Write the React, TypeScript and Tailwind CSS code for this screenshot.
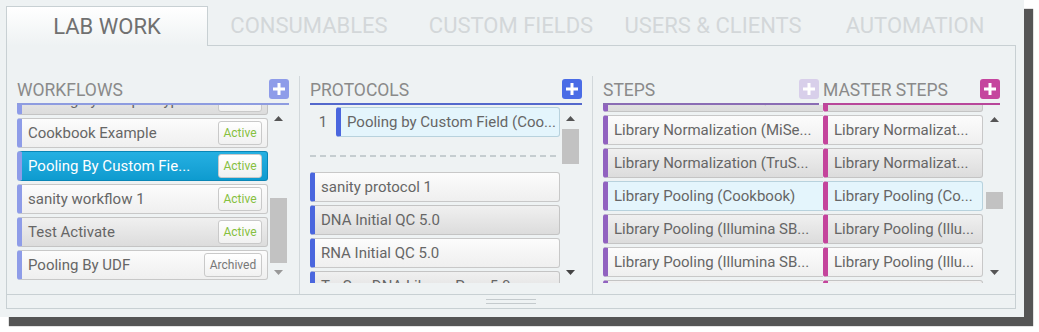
import React from "react";

type Tone = "white" | "gray" | "sel" | "blue";

const toneCls: Record<Tone, string> = {
  white: "bg-linear-to-b from-[#fcfcfc] to-[#efefef] border-[#c8c8c8] text-[#666]",
  gray: "bg-linear-to-b from-[#f0f0f0] to-[#dcdcdc] border-[#c4c4c4] text-[#666]",
  sel: "bg-linear-to-b from-[#25b0e2] to-[#0d9bcf] border-[#0a86b6] text-white",
  blue: "bg-[#e4f5fc] border-[#b8d2dd] text-[#666]",
};

function Row({
  text,
  tone,
  stripe,
  badge,
  extra = "",
}: {
  text: string;
  tone: Tone;
  stripe: string;
  badge?: "Active" | "Archived";
  extra?: string;
}) {
  return (
    <div
      className={`h-[30px] shrink-0 rounded-[3px] border border-l-[5px] flex items-center pl-[6px] pr-[5px] text-[15px] whitespace-nowrap overflow-hidden ${toneCls[tone]} ${stripe} ${extra}`}
    >
      <span className="flex-1">{text}</span>
      {badge === "Active" && (
        <span className="w-[44px] h-[24px] rounded-[3px] border border-[#c9c9c9] bg-linear-to-b from-white to-[#f1f1f1] text-[12px] text-[#86c040] flex items-center justify-center">
          Active
        </span>
      )}
      {badge === "Archived" && (
        <span className="w-[58px] h-[24px] rounded-[3px] border border-[#c9c9c9] bg-linear-to-b from-white to-[#f1f1f1] text-[12px] text-[#777] flex items-center justify-center">
          Archived
        </span>
      )}
    </div>
  );
}

function Up({ color = "#555" }: { color?: string }) {
  return (
    <svg width="9" height="5" viewBox="0 0 9 5" className="block mx-auto">
      <polygon points="0,5 9,5 4.5,0" fill={color} />
    </svg>
  );
}
function Down({ color = "#555" }: { color?: string }) {
  return (
    <svg width="9" height="5" viewBox="0 0 9 5" className="block mx-auto">
      <polygon points="0,0 9,0 4.5,5" fill={color} />
    </svg>
  );
}

function Plus({ bg }: { bg: string }) {
  return (
    <div className={`w-[20px] h-[20px] shrink-0 rounded-[3px] flex items-center justify-center mb-[4px] ${bg}`}>
      <svg width="12" height="12" viewBox="0 0 12 12">
        <rect x="4.5" y="0" width="3" height="12" fill="#fff" />
        <rect x="0" y="4.5" width="12" height="3" fill="#fff" />
      </svg>
    </div>
  );
}

function Header({ title, plus, line, extra = "" }: { title: string; plus: string; line: string; extra?: string }) {
  return (
    <div className={`h-[29px] flex items-end justify-between border-b-2 ${line} ${extra}`}>
      <span className="text-[17.5px] leading-[20px] text-[#8a8a8a] mb-[3px] whitespace-nowrap">{title}</span>
      <Plus bg={plus} />
    </div>
  );
}

const WF = "border-l-[#8e9ce8]";
const PR = "border-l-[#4a66de]";
const ST = "border-l-[#9162c0]";
const MS = "border-l-[#c4449c]";

export default function App() {
  const tabs = ["LAB WORK", "CONSUMABLES", "CUSTOM FIELDS", "USERS & CLIENTS", "AUTOMATION"];
  return (
    <div className="w-[1039px] h-[332px] bg-white font-[Roboto,sans-serif] overflow-hidden">
      <div className="w-[1024px] h-[317px] bg-[#eef2f3] shadow-[9px_9px_1px_#555] pt-[6px]">
        <div className="ml-[6px] w-[1010px]">
          {/* Tabs */}
          <div className="flex h-[40px]">
            {tabs.map((t, i) =>
              i === 0 ? (
                <div
                  key={t}
                  className="w-[202px] border-l border-t border-r border-[#c8d0d3] bg-linear-to-b from-white to-[#eef2f3] flex items-center justify-center text-[22px] text-[#707070]"
                >
                  {t}
                </div>
              ) : (
                <div
                  key={t}
                  className="w-[202px] border-b border-[#c8d0d3] flex items-center justify-center text-[22px] text-[#d3d7d9]"
                >
                  {t}
                </div>
              )
            )}
          </div>
          {/* Body */}
          <div className="border-l border-r border-b border-[#c8d0d3] h-[263px] flex flex-col">
            <div className="flex pt-[30px] h-[248px]">
              {/* Workflows */}
              <div className="w-[293px] border-r border-[#d2d8db] px-[10px]">
                <Header title="WORKFLOWS" plus="bg-[#8e9ce9]" line="border-[#8e9ce0]" />
                <div className="flex h-[178px]">
                  <div className="w-[251px] overflow-hidden">
                    <div className="flex flex-col gap-[3px] -mt-[20px]">
                      <Row text="Pooling by Sample Type" tone="gray" stripe={WF} badge="Active" />
                      <Row text="Cookbook Example" tone="white" stripe={WF} badge="Active" />
                      <Row text="Pooling By Custom Fie..." tone="sel" stripe={WF} badge="Active" />
                      <Row text="sanity workflow 1" tone="white" stripe={WF} badge="Active" />
                      <Row text="Test Activate" tone="gray" stripe={WF} badge="Active" />
                      <Row text="Pooling By UDF" tone="white" stripe={WF} badge="Archived" />
                    </div>
                  </div>
                  <div className="w-[17px] ml-[2px] flex flex-col">
                    <div className="mt-[11px] shrink-0"><Up /></div>
                    <div className="mt-[77px] h-[65px] shrink-0 bg-[#c2c2c2]" />
                    <div className="mt-[7px] shrink-0"><Down color="#999" /></div>
                  </div>
                </div>
              </div>
              {/* Protocols */}
              <div className="w-[293px] border-r border-[#d2d8db] px-[10px]">
                <Header title="PROTOCOLS" plus="bg-[#4a6ce6]" line="border-[#5468cc]" />
                <div className="flex h-[178px]">
                  <div className="w-[250px] overflow-hidden">
                    <div className="flex items-center mt-[2px]">
                      <span className="w-[26px] text-center text-[15px] text-[#666]">1</span>
                      <Row text="Pooling by Custom Field (Coo..." tone="blue" stripe={PR} extra="flex-1" />
                    </div>
                    <div className="mt-[18px] h-[2px] w-[252px] bg-[repeating-linear-gradient(90deg,#c5cdd0_0_6px,transparent_6px_10px)]" />
                    <div className="flex flex-col gap-[3px] mt-[15px]">
                      <Row text="sanity protocol 1" tone="white" stripe={PR} />
                      <Row text="DNA Initial QC 5.0" tone="gray" stripe={PR} />
                      <Row text="RNA Initial QC 5.0" tone="white" stripe={PR} />
                      <Row text="TruSeq DNA Library Prep 5.0" tone="gray" stripe={PR} />
                    </div>
                  </div>
                  <div className="w-[17px] ml-[2px] flex flex-col">
                    <div className="mt-[11px] shrink-0"><Up /></div>
                    <div className="mt-[8px] h-[35px] shrink-0 bg-[#c2c2c2]" />
                    <div className="mt-[106px] shrink-0"><Down color="#444" /></div>
                  </div>
                </div>
              </div>
              {/* Steps + Master steps */}
              <div className="flex-1 pl-[10px]">
                <div className="flex">
                  <Header title="STEPS" plus="bg-[#d8cfea]" line="border-[#8a6cb4]" extra="w-[216px]" />
                  <Header title="MASTER STEPS" plus="bg-[#c5459e]" line="border-[#b8479a]" extra="w-[177px] ml-[4px]" />
                </div>
                <div className="flex h-[178px]">
                  <div className="w-[220px] overflow-hidden">
                    <div className="w-[240px] flex flex-col gap-[3px] -mt-[23px]">
                      <Row text="Library Normalization (Illu..." tone="gray" stripe={ST} />
                      <Row text="Library Normalization (MiSe..." tone="white" stripe={ST} />
                      <Row text="Library Normalization (TruS..." tone="gray" stripe={ST} />
                      <Row text="Library Pooling (Cookbook)" tone="blue" stripe={ST} />
                      <Row text="Library Pooling (Illumina SB..." tone="gray" stripe={ST} />
                      <Row text="Library Pooling (Illumina SB..." tone="white" stripe={ST} />
                      <Row text="Library Prep Validation" tone="gray" stripe={ST} />
                    </div>
                  </div>
                  <div className="w-[160px] overflow-hidden">
                    <div className="flex flex-col gap-[3px] -mt-[23px]">
                      <Row text="Library Normalizat..." tone="gray" stripe={MS} extra="pl-[5px]" />
                      <Row text="Library Normalizat..." tone="white" stripe={MS} extra="pl-[5px]" />
                      <Row text="Library Normalizat..." tone="gray" stripe={MS} extra="pl-[5px]" />
                      <Row text="Library Pooling (Co..." tone="blue" stripe={MS} extra="pl-[5px]" />
                      <Row text="Library Pooling (Illu..." tone="gray" stripe={MS} extra="pl-[5px]" />
                      <Row text="Library Pooling (Illu..." tone="white" stripe={MS} extra="pl-[5px]" />
                      <Row text="Library Prep Valid..." tone="gray" stripe={MS} extra="pl-[5px]" />
                    </div>
                  </div>
                  <div className="w-[17px] ml-[3px] flex flex-col">
                    <div className="mt-[12px] shrink-0"><Up /></div>
                    <div className="mt-[70px] h-[17px] shrink-0 bg-[#c2c2c2]" />
                    <div className="mt-[61px] shrink-0"><Down color="#555" /></div>
                  </div>
                </div>
              </div>
            </div>
            {/* Footer */}
            <div className="border-t border-[#c8d0d3] h-[14px] flex items-center justify-center">
              <div className="w-[50px] h-[5px] border-t border-b border-[#c4cacd]" />
            </div>
          </div>
        </div>
      </div>
    </div>
  );
}
